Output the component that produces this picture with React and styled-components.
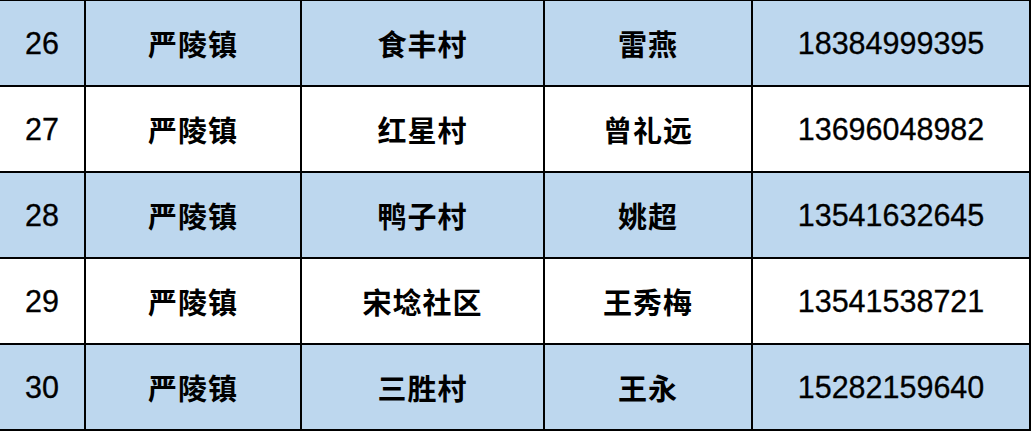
import React from 'react';
import styled, { createGlobalStyle } from 'styled-components';

const GlobalStyle = createGlobalStyle`
    html, body {
        margin: 0;
        padding: 0;
        background: #ffffff;
    }
    body {
        font-family: "Liberation Sans", "Noto Sans CJK SC", sans-serif;
    }
`;

const rows = [
    ['26', '严陵镇', '食丰村', '雷燕', '18384999395'],
    ['27', '严陵镇', '红星村', '曾礼远', '13696048982'],
    ['28', '严陵镇', '鸭子村', '姚超', '13541632645'],
    ['29', '严陵镇', '宋埝社区', '王秀梅', '13541538721'],
    ['30', '严陵镇', '三胜村', '王永', '15282159640'],
];

const App = () => {
    return (
        <>
            <GlobalStyle />
            <Table>
                {rows.map((row, i) => (
                    <Row key={row[0]} $shaded={i % 2 === 0}>
                        {row.map((value, j) => (
                            <Cell key={j} $numeric={j === 0 || j === 4}>
                                {value}
                            </Cell>
                        ))}
                    </Row>
                ))}
            </Table>
        </>
    );
};

export default App;

const Table = styled.div`
    width: 1031px;
    border-top: 1px solid #000;
`;

const Row = styled.div`
    display: grid;
    grid-template-columns: 86px 216px 243px 208px 278px;
    height: 86px;
    background-color: ${p => (p.$shaded ? '#bdd7ee' : '#ffffff')};
`;

const Cell = styled.div`
    box-sizing: border-box;
    display: flex;
    align-items: center;
    justify-content: center;
    border-right: 2px solid #000;
    border-bottom: 2px solid #000;
    color: #000;
    font-size: ${p => (p.$numeric ? '30.5px' : '29px')};
    font-family: ${p => (p.$numeric ? '"Liberation Sans", sans-serif' : '"Noto Sans CJK SC", sans-serif')};
    font-weight: ${p => (p.$numeric ? 400 : 700)};
    letter-spacing: ${p => (p.$numeric ? '0' : '1px')};
    -webkit-text-stroke: ${p => (p.$numeric ? '0.3px #000' : '0')};
`;
